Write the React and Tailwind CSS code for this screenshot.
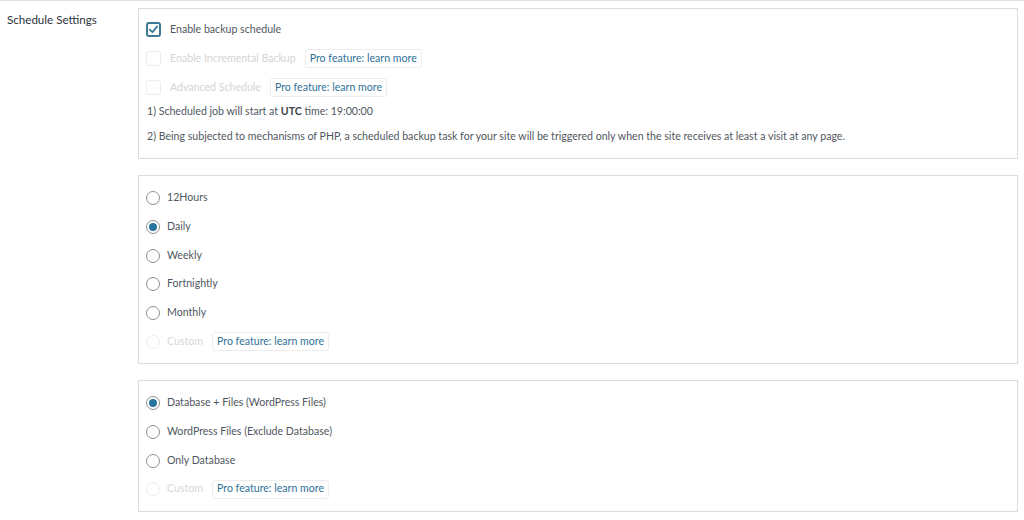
const Pro = () => (
  <span className="ml-[9px] inline-flex h-[19px] items-center rounded-[3px] border border-[#ededed] bg-white px-[4px] text-[#2f7196]">
    Pro feature: learn more
  </span>
);

const Check = ({ checked, disabled, children }) => (
  <div className="flex h-[29px] items-center">
    <span
      className={`flex h-[15px] w-[15px] items-center justify-center rounded-[3px] ${
        checked ? 'border-[2px] border-[#3d7895]' : disabled ? 'border border-[#ececec]' : 'border border-[#8c8f94]'
      }`}
    >
      {checked && (
        <svg width="11" height="11" viewBox="0 0 12 12" fill="none">
          <path d="M2 6.2 L4.8 9 L10 2.6" stroke="#2e6f90" strokeWidth="1.8" strokeLinecap="round" strokeLinejoin="round" />
        </svg>
      )}
    </span>
    <span className={`ml-[9px] ${disabled ? 'text-[#d4d4d4]' : 'text-[#50575e]'}`}>{children}</span>
  </div>
);

const Radio = ({ checked, disabled, children, pro }) => (
  <div className="flex h-[28.7px] items-center">
    <span
      className={`flex h-[14px] w-[14px] items-center justify-center rounded-full border ${
        disabled ? 'border-[#eeeeee]' : 'border-[#8c8f94]'
      }`}
    >
      {checked && <span className="h-[8px] w-[8px] rounded-full bg-[#2a76a1]" />}
    </span>
    <span className={`ml-[7px] ${disabled ? 'text-[#d8d8d8]' : 'text-[#50575e]'}`}>{children}</span>
    {pro && <Pro />}
  </div>
);

const Box = ({ className, children }) => (
  <div className={`border border-[#dcdcdc] bg-white pl-[7px] ${className}`}>{children}</div>
);

export default function App() {
  return (
    <div
      className="h-[520px] w-[1024px] overflow-hidden border-t border-[#dedede] bg-white text-[10.6px]"
      style={{ fontFamily: 'Lato, "Open Sans", Arial, sans-serif' }}
    >
      <div className="flex">
        <div className="w-[138px] shrink-0 pl-[7px] pt-[10px] text-[11.6px] text-[#2c3338]">Schedule Settings</div>
        <div className="flex w-[880px] flex-col gap-[16px] pt-[7px]">
          <Box className="h-[151px] pt-[6px]">
            <Check checked>Enable backup schedule</Check>
            <div className="flex h-[29px] items-center">
              <Check disabled>Enable Incremental Backup</Check>
              <Pro />
            </div>
            <div className="flex h-[29px] items-center">
              <Check disabled>Advanced Schedule</Check>
              <Pro />
            </div>
            <p className="mt-[-3px] pl-[1px] leading-[24px] text-[#50575e]">
              1) Scheduled job will start at <b className="font-bold text-[#3c434a]">UTC</b> time: 19:00:00
            </p>
            <p className="pl-[1px] leading-[26px] text-[#50575e]">
              2) Being subjected to mechanisms of PHP, a scheduled backup task for your site will be triggered only when the site receives at least a visit at any page.
            </p>
          </Box>
          <Box className="h-[189px] pt-[8px]">
            <Radio>12Hours</Radio>
            <Radio checked>Daily</Radio>
            <Radio>Weekly</Radio>
            <Radio>Fortnightly</Radio>
            <Radio>Monthly</Radio>
            <Radio disabled pro>Custom</Radio>
          </Box>
          <Box className="h-[132px] pt-[8px]">
            <Radio checked>Database + Files (WordPress Files)</Radio>
            <Radio>WordPress Files (Exclude Database)</Radio>
            <Radio>Only Database</Radio>
            <Radio disabled pro>Custom</Radio>
          </Box>
        </div>
      </div>
    </div>
  );
}
